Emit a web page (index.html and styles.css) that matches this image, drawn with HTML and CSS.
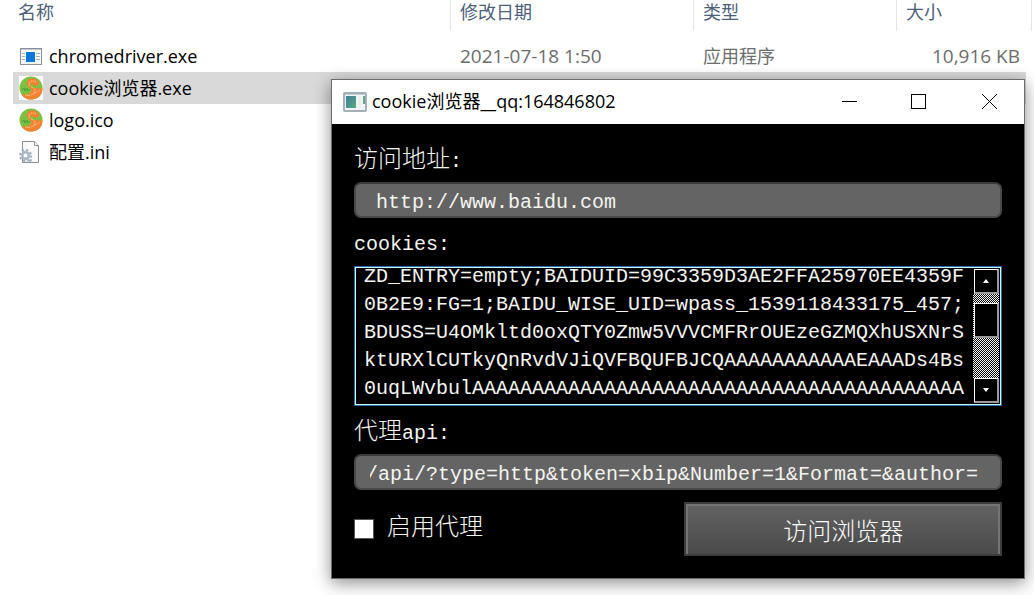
FILE: index.html
```html
<!DOCTYPE html>
<html lang="zh-CN">
<head>
    <meta charset="UTF-8">
    <title>cookie浏览器</title>
    <meta name="viewport" content="width=device-width, initial-scale=1">
    <link rel="stylesheet" href="styles.css">
</head>
<body>

<!-- 文件列表 -->
<table class="files">
    <colgroup>
        <col>
        <col class="col-date">
        <col class="col-type">
        <col class="col-size">
    </colgroup>
    <thead>
        <tr><th>名称</th><th>修改日期</th><th>类型</th><th>大小</th></tr>
    </thead>
    <tbody>
        <tr>
            <td>
                <div class="file">
                    <svg class="file-icon" viewBox="0 0 24 24">
                        <rect x="1.5" y="4.5" width="21" height="16" fill="#f4f6f8" stroke="#8a9099"/>
                        <path d="M2 5.5h20" stroke="#c3c8ce"/>
                        <rect x="7" y="8" width="9" height="10" fill="#0a78d7"/>
                        <path d="M3 9.5h3M3 12.5h3M3 15.5h3M17 9.5h4M17 12.5h4M17 15.5h4" stroke="#a3b0bd"/>
                    </svg>
                    <span>chromedriver.exe</span>
                </div>
            </td>
            <td class="num">2021-07-18 1:50</td>
            <td>应用程序</td>
            <td class="num size">10,916 KB</td>
        </tr>
        <tr class="selected">
            <td>
                <div class="file">
                    <svg class="file-icon boxed" viewBox="0 0 24 24">
                        <circle cx="12" cy="12" r="11.5" fill="#7cc142"/>
                        <path d="M10 3c4-2 9 0 10 4 0 2-1 3-3 3-2 0-3-2-5-2-1 2 0 3 3 4 3 0 5 1 8.4 0C24 19 19 23.5 12 23.5c-4 0-8-2-9.5-5.5 4 1 9 0 10-3 0-3-4-3-4.500-7 0-2 .5-4 2-5z" fill="#f58233"/>
                        <path d="M17 6c-3-2-7-1-7 2 0 4 7 3 6 8-1 3-6 4-10 3" fill="none" stroke="#fbe0a0" stroke-dasharray="1 1"/>
                        <path d="M14 17c3 0 5-1 7-3" fill="none" stroke="#fbb070"/>
                        <path d="M3 14l2-2 1 3 2-3 1 3 2-2" fill="none" stroke="#4a9a3a"/>
                    </svg>
                    <span>cookie浏览器.exe</span>
                </div>
            </td>
            <td></td>
            <td></td>
            <td class="size"></td>
        </tr>
        <tr>
            <td>
                <div class="file">
                    <svg class="file-icon" viewBox="0 0 24 24">
                        <circle cx="12" cy="12" r="11.5" fill="#7cc142"/>
                        <path d="M10 3c4-2 9 0 10 4 0 2-1 3-3 3-2 0-3-2-5-2-1 2 0 3 3 4 3 0 5 1 8.4 0C24 19 19 23.5 12 23.5c-4 0-8-2-9.5-5.5 4 1 9 0 10-3 0-3-4-3-4.500-7 0-2 .5-4 2-5z" fill="#f58233"/>
                        <path d="M17 6c-3-2-7-1-7 2 0 4 7 3 6 8-1 3-6 4-10 3" fill="none" stroke="#fbe0a0" stroke-dasharray="1 1"/>
                        <path d="M14 17c3 0 5-1 7-3" fill="none" stroke="#fbb070"/>
                        <path d="M3 14l2-2 1 3 2-3 1 3 2-2" fill="none" stroke="#4a9a3a"/>
                    </svg>
                    <span>logo.ico</span>
                </div>
            </td>
            <td></td>
            <td></td>
            <td class="size"></td>
        </tr>
        <tr>
            <td>
                <div class="file">
                    <svg class="file-icon" viewBox="0 0 24 24">
                        <path d="M3.5 1.5h12l4 4v17h-16z" fill="#fafafa" stroke="#8d8d8d"/>
                        <path d="M15.5 1.5v4h4" fill="#fff" stroke="#8d8d8d"/>
                        <circle cx="6.5" cy="15.5" r="5.5" fill="none" stroke="#9fb0bf" stroke-width="2" stroke-dasharray="2.3 2"/>
                        <circle cx="6.5" cy="15.5" r="3.3" fill="#fff" stroke="#a9b8c6" stroke-width="2.6"/>
                        <path d="M10 20.5l2-2 1 2-2 2z" fill="#9fb0bf"/>
                    </svg>
                    <span>配置.ini</span>
                </div>
            </td>
            <td></td>
            <td></td>
            <td class="size"></td>
        </tr>
    </tbody>
</table>

<!-- 主窗口 -->
<div class="window">
    <div class="titlebar">
        <svg class="app-icon" viewBox="0 0 24 20">
            <defs>
                <linearGradient id="screen" x1="0" y1="0" x2="1" y2="1">
                    <stop offset="0" stop-color="#3f7fa0"/>
                    <stop offset="1" stop-color="#5aa87c"/>
                </linearGradient>
            </defs>
            <rect x="1" y="1" width="22" height="18" rx="1" fill="#f2f4f5" stroke="#a4aeb6" stroke-width="2"/>
            <path d="M2 2.5h20" stroke="#c5d0d8"/>
            <rect x="3" y="4" width="10" height="12" fill="url(#screen)"/>
            <rect x="15" y="4" width="3" height="12" fill="#eceff0"/>
            <rect x="20" y="4" width="2" height="8" fill="#5fa68a"/>
        </svg>
        <span class="title">cookie浏览器__qq:164846802</span>
        <button class="win-btn" type="button" aria-label="最小化">
            <svg viewBox="0 0 16 16"><path d="M1 8.5h15"/></svg>
        </button>
        <button class="win-btn" type="button" aria-label="最大化">
            <svg viewBox="0 0 16 16"><rect x=".5" y="1.5" width="14" height="14"/></svg>
        </button>
        <button class="win-btn" type="button" aria-label="关闭">
            <svg viewBox="0 0 16 16"><path d="M1 1l15 15M16 1L1 16"/></svg>
        </button>
    </div>

    <form class="panel">
        <div class="field">
            <label for="url"><span class="zh">访问地址</span>:</label>
            <input id="url" class="text-input url-input" type="text" value="http://www.baidu.com">
        </div>

        <div class="field">
            <label for="cookies">cookies:</label>
            <div class="cookie-box">
                <textarea id="cookies" spellcheck="false">ZD_ENTRY=empty;BAIDUID=99C3359D3AE2FFA25970EE4359F
0B2E9:FG=1;BAIDU_WISE_UID=wpass_1539118433175_457;
BDUSS=U4OMkltd0oxQTY0Zmw5VVVCMFRrOUEzeGZMQXhUSXNrS
ktURXlCUTkyQnRvdVJiQVFBQUFBJCQAAAAAAAAAAAEAAADs4Bs
0uqLWvbulAAAAAAAAAAAAAAAAAAAAAAAAAAAAAAAAAAAAAAAAA</textarea>
                <div class="scrollbar">
                    <button class="arrow" type="button" aria-label="向上"><svg viewBox="0 0 6 4"><path d="M3 0l3 4H0z"/></svg></button>
                    <div class="track"><div class="thumb"></div></div>
                    <button class="arrow" type="button" aria-label="向下"><svg viewBox="0 0 6 4"><path d="M0 0h6L3 4z"/></svg></button>
                </div>
            </div>
        </div>

        <div class="field">
            <label for="api"><span class="zh">代理</span>api:</label>
            <input id="api" class="text-input" type="text" value="/api/?type=http&amp;token=xbip&amp;Number=1&amp;Format=&amp;author=">
        </div>

        <div class="bottom">
            <label class="check"><input type="checkbox"><span class="zh">启用代理</span></label>
            <button class="go" type="button">访问浏览器</button>
        </div>
    </form>
</div>

<script>
// 滚动到内容末尾
const cookies = document.getElementById('cookies');
const api = document.getElementById('api');
cookies.scrollTop = cookies.scrollHeight;
api.scrollLeft = api.scrollWidth;
</script>
</body>
</html>
```
FILE: styles.css
```css
* { box-sizing: border-box; }
body { margin: 0; min-height: 100vh; background: #fff; overflow: hidden; font-family: "Open Sans", "Noto Sans CJK SC", sans-serif; font-size: 18px; color: #000; }

/* 文件列表 */
.files { width: 100%; padding: 0 2px 0 13px; border-spacing: 0; table-layout: fixed; }
.col-date { width: 243px; }
.col-type { width: 203px; }
.col-size { width: 135px; }
.files th { height: 40px; padding: 0 0 0 9px; text-align: left; vertical-align: top; line-height: 24px; font-weight: normal; color: #4c607a; background: linear-gradient(#e3e3e3, #e3e3e3) no-repeat right top / 1px 31px; }
.files th:first-child { padding-left: 5px; }
.files td { height: 32px; padding: 0 0 0 9px; line-height: 24px; color: #6d6d6d; white-space: nowrap; }
.files td:first-child { padding-left: 6px; color: #000; }
.files td.num { font-size: 19px; }
.files td.size { padding: 0 6px 0 0; border-right: 6px solid #fff; text-align: right; }
.selected td { background: #d9d9d9; }
.file { display: flex; align-items: center; gap: 6px; }
.file-icon { width: 24px; height: 24px; }
.file-icon.boxed { background: #fff; }

/* 窗口 */
.window { position: absolute; left: 331px; right: 9px; top: 79px; border: 1px solid #6b6b6b; background: #000; box-shadow: 0 4px 16px rgba(0, 0, 0, 0.45); }
.titlebar { display: flex; align-items: center; height: 44px; padding-left: 11px; background: #fff; }
.app-icon { width: 24px; height: 20px; margin-right: 5px; }
.title { flex: 1; line-height: 24px; padding-bottom: 2px; }
.win-btn { width: 70px; height: 44px; padding: 0; border: none; background: none; }
.win-btn svg { width: 16px; height: 16px; fill: none; stroke: #000; }

.panel { display: flex; flex-direction: column; gap: 12px; padding: 22px; color: #f4f4f0; font-family: "Liberation Mono", "Noto Sans CJK SC", monospace; font-size: 20px; font-weight: 300; }
.field { display: flex; flex-direction: column; gap: 8px; }
.field label { height: 28px; line-height: 30px; }
.zh { font-size: 24px; }
.text-input { width: 100%; height: 36px; padding: 4px 22px 0 14px; border: 2px solid #484848; border-top-color: #3a3a3a; border-radius: 7px; background: #646464; color: inherit; font: inherit; outline: none; }
.url-input { padding-left: 20px; }

.cookie-box { display: flex; height: 140px; padding: 1px; border: 1px solid #2a6ea5; box-shadow: inset 0 0 0 1px #d2f5ff; }
.cookie-box textarea { flex: 1; min-width: 0; margin: 1px; padding: 0 0 0 7px; border: none; outline: none; resize: none; overflow: hidden; background: #000; color: inherit; font: inherit; line-height: 28px; white-space: pre; }
.scrollbar { display: flex; flex-direction: column; width: 27px; padding: 1px 1px 1px 0; }
.arrow, .thumb { margin: 0 0 0 1px; border: 1px solid #fff; border-right: 2px solid #9a9a9a; border-bottom: 2px solid #9a9a9a; background: #000; }
.arrow { display: flex; align-items: center; justify-content: center; height: 25px; padding: 0; }
.arrow svg { width: 6px; height: 4px; fill: #fff; }
.track { flex: 1; padding-top: 9px; background: repeating-conic-gradient(#fff 0 25%, #000 0 50%) 0 0 / 2px 2px; }
.thumb { height: 35px; }

.bottom { display: flex; align-items: center; justify-content: space-between; }
.check { display: flex; align-items: center; gap: 13px; line-height: 28px; }
.check input { appearance: none; width: 20px; height: 20px; margin: 0; border: 1px solid #555; background: #fff; }
.go { width: 49%; height: 54px; border: 2px solid #3c3c3c; background: linear-gradient(#636363, #4a4a4a); box-shadow: inset 2px 2px #747474, inset -2px 0 #747474; color: #fff; font: inherit; font-size: 24px; }
```
